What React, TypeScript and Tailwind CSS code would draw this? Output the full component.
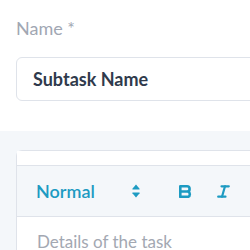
/* Subtask form: name field and rich text editor */

function ArrowsIcon() {
  return (
    <svg width="8" height="14" viewBox="0 0 8 14" className="shrink-0">
      <path d="M4 0.5 L7.6 4.8 Q8 5.4 7.2 5.4 H0.8 Q0 5.4 0.4 4.8 Z" fill="#1d9bc2" />
      <path d="M4 13.5 L7.6 9.2 Q8 8.6 7.2 8.6 H0.8 Q0 8.6 0.4 9.2 Z" fill="#1d9bc2" />
    </svg>
  );
}

function BoldIcon() {
  return (
    <svg width="15" height="13" viewBox="0 0 15 13" className="shrink-0">
      <path
        d="M2.3 1.3 H9 A2.6 2.6 0 0 1 9 6.5 H2.3 Z M2.3 6.5 H10 A2.9 2.9 0 0 1 10 11.9 H2.3 Z"
        fill="none"
        stroke="#1d9bc2"
        strokeWidth="2.6"
        strokeLinejoin="round"
      />
    </svg>
  );
}

function ItalicIcon() {
  return (
    <svg width="13" height="13" viewBox="0 0 13 13" className="shrink-0">
      <g stroke="#1d9bc2" strokeWidth="2.2" strokeLinecap="round" fill="none">
        <line x1="4.5" y1="1.3" x2="11.8" y2="1.3" />
        <line x1="1.2" y1="11.7" x2="8.5" y2="11.7" />
        <line x1="8" y1="1.3" x2="5" y2="11.7" />
      </g>
    </svg>
  );
}

function UnderlineIcon() {
  return (
    <svg width="13" height="14" viewBox="0 0 13 14" className="shrink-0">
      <path d="M2.5 1 V6.5 A4 4 0 0 0 10.5 6.5 V1" fill="none" stroke="#1d9bc2" strokeWidth="2.2" />
      <rect x="0" y="12.5" width="13" height="1.6" rx="0.8" fill="#1d9bc2" />
    </svg>
  );
}

export default function App() {
  return (
    <div className="h-[250px] w-[250px] overflow-hidden bg-white font-['Lato','Liberation_Sans',sans-serif]">
      <div className="w-[300px] px-4 pt-[15px] pb-[30px]">
        <p className="text-[18px] leading-[27px] text-[#a1a7b3]">Name *</p>
        <div className="mt-[15px] flex h-[44px] items-center rounded-md border border-[#dfe3ea] px-4">
          <span className="text-[18px] font-bold text-[#2f3a4c]">Subtask Name</span>
        </div>
      </div>
      <div className="w-[320px] bg-[#f4f7fa] px-4 pt-[19px]">
        <div className="rounded-t-md border border-b-0 border-[#dfe3ea] bg-white">
          <div className="h-[15px] border-b border-[#dfe3ea] bg-white" />
          <div className="flex h-[51px] items-center border-b border-[#dfe3ea] bg-[#f4f7fa] pl-[19px]">
            <div className="flex w-[104px] items-center justify-between">
              <span className="text-[18px] font-semibold text-[#1d9bc2]">Normal</span>
              <ArrowsIcon />
            </div>
            <div className="ml-[38px] flex items-center">
              <BoldIcon />
              <div className="ml-[24px]">
                <ItalicIcon />
              </div>
              <div className="ml-[20px] pt-[2px]">
                <UnderlineIcon />
              </div>
            </div>
          </div>
          <div className="h-[60px] px-5 pt-[12px]">
            <p className="text-[17px] text-[#a3a8b2]">Details of the task</p>
          </div>
        </div>
      </div>
    </div>
  );
}
